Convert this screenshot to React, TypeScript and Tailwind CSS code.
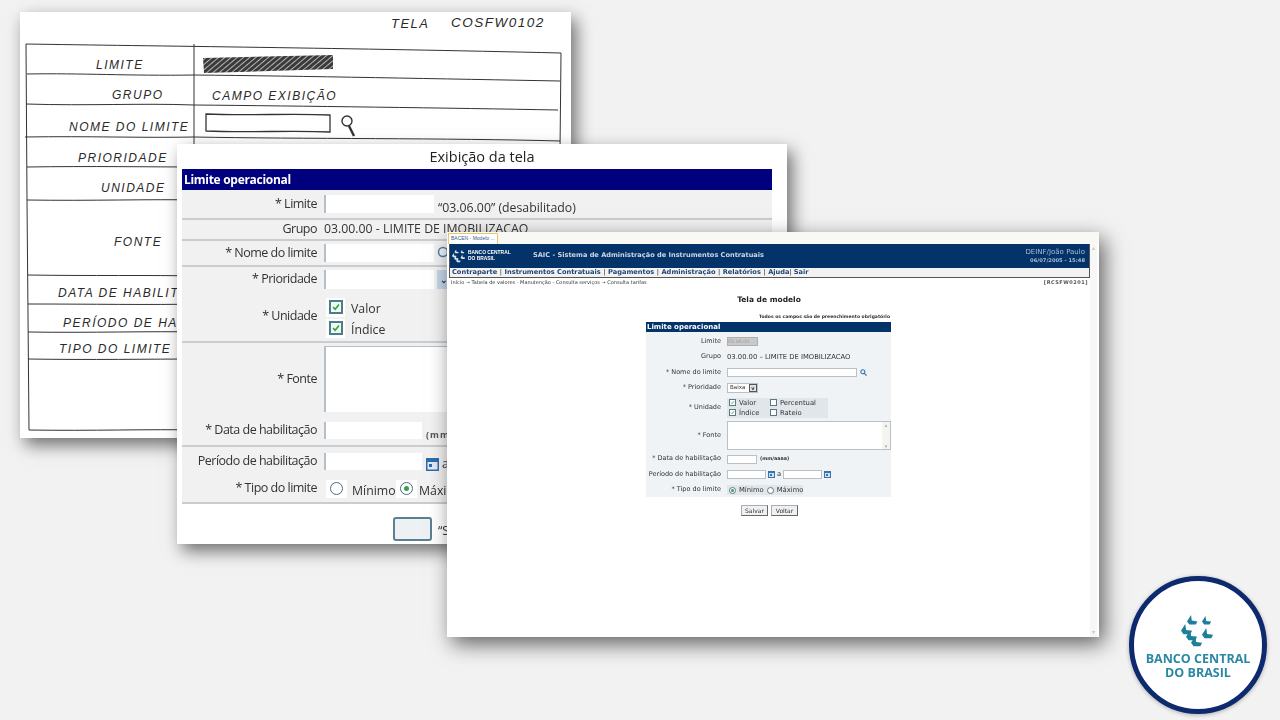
import React from "react";

const Check = () => (
  <svg viewBox="0 0 12 12" className="w-full h-full">
    <path d="M2.5 6.2 L5 8.8 L9.6 3" fill="none" stroke="#2fa63a" strokeWidth="2" />
  </svg>
);

function Sketch() {
  const hand = "font-['Liberation_Sans',sans-serif] italic text-[12px] tracking-[1.5px] fill-[#2a2a2a]";
  const rows = [
    "M27 74 C80 73 130 76 194 75 C300 76 450 79 560 81",
    "M26 104 C90 106 140 103 194 105 C300 106 450 108 558 110",
    "M25 137 C90 136 140 138 194 137 C300 139 450 138 560 141",
    "M27 167 C90 166 150 167 200 167",
    "M27 200 C90 201 150 199 200 200",
    "M28 275 C90 276 150 275 200 276",
    "M28 304 C90 304 150 305 200 304",
    "M28 332 C90 333 150 331 200 332",
    "M28 359 C90 360 150 359 200 359",
    "M29 430 C90 431 150 429 200 430",
  ];
  return (
    <svg viewBox="20 12 551 426" className="w-full h-full">
      <defs>
        <pattern id="hatch" width="4" height="4" patternUnits="userSpaceOnUse" patternTransform="rotate(50)">
          <rect width="4" height="4" fill="#3a3a3a" />
          <rect width="1" height="4" fill="#b5b5b5" />
        </pattern>
      </defs>
      <g fill="none" stroke="#333" strokeWidth="1">
        <path d="M26 44 C150 46 350 48 561 53" />
        <path d="M26 44 L27 200 L29 430" />
        <path d="M194 44 L194 150" />
        <path d="M561 53 L560 150" />
        {rows.map((d) => (
          <path key={d} d={d} />
        ))}
        <path d="M206 114 C250 116 290 113 330 115 L330 132 C290 130 250 133 206 131 Z" strokeWidth="1.3" />
        <circle cx="347" cy="121" r="5" strokeWidth="1.4" />
        <path d="M349 126 L354 136" strokeWidth="2.4" />
      </g>
      <polygon points="203,58 333,55 333,69 204,73" fill="url(#hatch)" />
      <text x="391" y="28" className={hand + " text-[13px] tracking-[0.5px]"}>TELA</text>
      <text x="451" y="27" className={hand + " text-[13.5px] tracking-[0.4px]"}>COSFW0102</text>
      <text x="96" y="69" className={hand}>LIMITE</text>
      <text x="112" y="99" className={hand}>GRUPO</text>
      <text x="212" y="100" className={hand}>CAMPO EXIBIÇÃO</text>
      <text x="69" y="131" className={hand + " text-[11px]"}>NOME DO LIMITE</text>
      <text x="78" y="162" className={hand + " text-[11px]"}>PRIORIDADE</text>
      <text x="101" y="192" className={hand + " text-[11px]"}>UNIDADE</text>
      <text x="114" y="246" className={hand}>FONTE</text>
      <text x="58" y="297" className={hand + " text-[11px]"}>DATA DE HABILITAÇÃO</text>
      <text x="63" y="327" className={hand + " text-[11px]"}>PERÍODO DE HABILITAÇÃO</text>
      <text x="59" y="353" className={hand + " text-[11px]"}>TIPO DO LIMITE</text>
    </svg>
  );
}

function MidRow({ label, h, line, children }: { label: string; h: string; line?: boolean; children?: React.ReactNode }) {
  return (
    <div className={`flex items-center ${h} ${line ? "border-b-2 border-[#c9cdd0]" : ""}`}>
      <div className="w-[135px] shrink-0 text-right text-[12.5px] tracking-[-0.5px] text-[#333] whitespace-nowrap">{label}</div>
      <div className="ml-[7px] flex-1 flex items-center text-[#333] text-[12.3px] whitespace-nowrap">{children}</div>
    </div>
  );
}

const MidInput = ({ w = "w-[110px]", h = "h-[18px]" }: { w?: string; h?: string }) => (
  <div className={`${w} ${h} bg-white border-l-2 border-[#b4bfc9] shrink-0`} />
);

const MidCheck = () => (
  <div className="w-[19px] h-[19px] bg-white flex items-center justify-center shrink-0">
    <div className="w-[14px] h-[14px] border-2 border-[#4d7d8c] bg-[#f2fbf2]">
      <Check />
    </div>
  </div>
);

function MidRadio({ on }: { on?: boolean }) {
  return (
    <div className="w-[21px] h-[18px] bg-white flex items-center justify-center shrink-0">
      <div className="w-[13px] h-[13px] rounded-full border border-[#4d6d7c] flex items-center justify-center">
        {on ? <div className="w-[5px] h-[5px] rounded-full bg-[#38a048]" /> : null}
      </div>
    </div>
  );
}

function Middle() {
  return (
    <div className="absolute left-[177px] top-[144px] w-[610px] h-[400px] bg-white shadow-[5px_7px_16px_rgba(0,0,0,0.55)] font-['Open_Sans',sans-serif] blur-[0.3px]">
      <div className="h-[25px] flex items-center justify-center text-[14.5px] text-[#222]">Exibição da tela</div>
      <div className="ml-[5px] w-[590px]">
        <div className="h-[21px] bg-[#00007f] text-white font-bold text-[12px] tracking-[-0.3px] flex items-center pl-[2px]">Limite operacional</div>
        <div className="bg-[#f1f1f1]">
          <MidRow label="* Limite" h="h-[30px]" line>
            <MidInput />
            <span className="ml-[4px] mt-[8px]">“03.06.00” (desabilitado)</span>
          </MidRow>
          <MidRow label="Grupo" h="h-[21px]" line>
            <span className="-mt-[1px]">03.00.00 - LIMITE DE IMOBILIZACAO</span>
          </MidRow>
          <MidRow label="* Nome do limite" h="h-[26px]" line>
            <MidInput />
            <svg viewBox="0 0 14 14" className="ml-[3px] w-[14px] h-[14px]">
              <circle cx="6" cy="6" r="4.5" fill="none" stroke="#4a7fb0" strokeWidth="1.5" />
            </svg>
          </MidRow>
          <MidRow label="* Prioridade" h="h-[25px]">
            <MidInput h="h-[19px]" />
            <div className="ml-[3px] w-[14px] h-[19px] bg-[#c5d6ea] flex items-center justify-center text-[#23456b] text-[9px] font-bold">⌄</div>
          </MidRow>
          <MidRow label="* Unidade" h="h-[51px]" line>
            <div className="flex flex-col ml-[2px] mt-[2px]">
              <div className="flex items-center h-[21px]">
                <MidCheck />
                <span className="ml-[6px] mt-[5px]">Valor</span>
              </div>
              <div className="flex items-center h-[21px]">
                <MidCheck />
                <span className="ml-[6px] mt-[5px]">Índice</span>
              </div>
            </div>
          </MidRow>
          <MidRow label="* Fonte" h="h-[72px]">
            <div className="w-[200px] h-[66px] bg-white border-l-2 border-t border-[#b4bfc9] -mt-[1px]" />
          </MidRow>
          <MidRow label="* Data de habilitação" h="h-[32px]" line>
            <MidInput w="w-[98px]" h="h-[17px]" />
            <span className="ml-[4px] mt-[10px] text-[9px] font-bold tracking-[1px] text-[#555]">(mm/aaaa)</span>
          </MidRow>
          <MidRow label="Período de habilitação" h="h-[28px]">
            <MidInput w="w-[98px]" h="h-[17px]" />
            <svg viewBox="0 0 13 13" className="ml-[4px] mt-[6px] w-[13px] h-[13px]">
              <rect width="13" height="13" fill="#2f6cab" />
              <rect x="1.5" y="4" width="10" height="7.5" fill="#dfeaf5" />
              <rect x="3" y="6" width="3" height="3" fill="#2f6cab" />
            </svg>
            <span className="ml-[3px] mt-[6px]">a</span>
          </MidRow>
          <MidRow label="* Tipo do limite" h="h-[29px]" line>
            <div className="ml-[2px]"><MidRadio /></div>
            <span className="ml-[5px] mt-[6px] w-[44px]">Mínimo</span>
            <MidRadio on />
            <span className="ml-[2px] mt-[6px]">Máximo</span>
          </MidRow>
        </div>
        <div className="flex pl-[211px] pt-[13px] items-end">
          <div className="w-[39px] h-[24px] rounded-[3px] border-2 border-[#5b7f93] bg-[#eef1f4]" />
          <span className="ml-[6px] text-[12.5px] text-[#333]">“Salvar”</span>
        </div>
      </div>
    </div>
  );
}

function Cal() {
  return (
    <svg viewBox="0 0 7 7" className="w-[7px] h-[7px] shrink-0">
      <rect width="7" height="7" fill="#3a72b0" />
      <rect x="1" y="2" width="5" height="4" fill="#cfe0f0" />
      <rect x="2" y="3" width="2" height="2" fill="#3a72b0" />
    </svg>
  );
}

const Field = ({ w }: { w: string }) => <div className={`${w} h-[9px] bg-white border border-[#b9c0c6] shrink-0`} />;
const Box = ({ on }: { on?: boolean }) => (
  <div className="w-[7px] h-[7px] border border-[#5f7785] bg-white shrink-0">{on ? <Check /> : null}</div>
);
const Dot = ({ on }: { on?: boolean }) => (
  <div className="w-[7px] h-[7px] rounded-full border border-[#5f7785] bg-white shrink-0 flex items-center justify-center">
    {on ? <div className="w-[3px] h-[3px] rounded-full bg-[#3c9c4c]" /> : null}
  </div>
);

function TRow({ label, h, children }: { label: string; h: string; children?: React.ReactNode }) {
  return (
    <div className={`flex items-center ${h}`}>
      <div className="w-[75px] shrink-0 text-right text-[6.5px] text-[#333] whitespace-nowrap">{label}</div>
      <div className="ml-[6px] flex-1 flex items-center text-[6.8px] text-[#333] whitespace-nowrap">{children}</div>
    </div>
  );
}

function LogoMark({ color, cls }: { color: string; cls: string }) {
  const piece = "M5 0 L6 7 L13 8 L11 12 L3 12 L0 8 Z";
  const spots: [number, number, number][] = [
    [6, 1, 0.8],
    [21, 2, 0.7],
    [0, 10, 0.85],
    [5, 16, 0.85],
    [10, 22, 0.85],
    [21, 14, 0.85],
  ];
  return (
    <svg viewBox="0 0 34 34" className={cls}>
      {spots.map(([x, y, s]) => (
        <path key={`${x}-${y}`} d={piece} transform={`translate(${x} ${y}) scale(${s})`} fill={color} />
      ))}
    </svg>
  );
}

function Front() {
  const nav = ["Contraparte", "Instrumentos Contratuais", "Pagamentos", "Administração", "Relatórios"];
  return (
    <div className="absolute left-[447px] top-[232px] w-[652px] h-[405px] bg-white shadow-[5px_7px_20px_rgba(0,0,0,0.6)] font-['DejaVu_Sans',sans-serif] flex flex-col blur-[0.35px]">
      <div className="h-[12px] flex items-end pl-[1px] bg-[#f8f8f4]">
        <div className="w-[50px] h-[11px] bg-white border border-[#e8c66a] border-b-0 rounded-t-[1px] text-[5px] text-[#3a5d8a] flex items-center pl-[2px] font-['Liberation_Sans',sans-serif] whitespace-nowrap overflow-hidden">
          BACEN - Modelo ...
        </div>
      </div>
      <div className="flex flex-1 min-h-0">
        <div className="w-[643px] pl-[2px] flex flex-col">
          <div className="border border-[#555] border-t-0">
            <div className="h-[24px] bg-[#04336a] flex items-center text-white">
              <div className="ml-[2px] flex items-center w-[81px] shrink-0">
                <LogoMark color="#d7e6ef" cls="w-[14px] h-[14px] shrink-0" />
                <div className="ml-[2px] text-[4.9px] font-bold leading-[6px] font-['Liberation_Sans',sans-serif] whitespace-nowrap">
                  BANCO CENTRAL
                  <br />
                  DO BRASIL
                </div>
              </div>
              <div className="text-[6.6px] font-bold text-[#c9d6e4] whitespace-nowrap">SAIC - Sistema de Administração de Instrumentos Contratuais</div>
              <div className="ml-auto mr-[4px] text-right text-[#a9bdd3]">
                <div className="text-[7px] leading-[9px]">DEINF/João Paulo</div>
                <div className="text-[5.2px] leading-[7px] font-bold">06/07/2005 - 15:48</div>
              </div>
            </div>
            <div className="h-[9px] bg-[#f2f2f2] flex items-center pl-[2px] text-[6.65px] font-bold text-[#1e4473] whitespace-nowrap">
              {nav.map((n) => (
                <React.Fragment key={n}>
                  <span>{n}</span>
                  <span className="mx-[2.5px] text-[#222] font-normal">|</span>
                </React.Fragment>
              ))}
              <span>Ajuda</span>
              <span className="mr-[2px] text-[#222] font-normal">|</span>
              <span>Sair</span>
            </div>
          </div>
          <div className="h-[8px] flex items-end justify-between pl-[2px] pr-[2px] text-[5px] text-[#333] whitespace-nowrap leading-[7px]">
            <span>Início  ➝  Tabela de valores - Manutenção - Consulta serviços  ➝  Consulta tarifas</span>
            <span className="font-bold tracking-[0.5px] text-[#555]">[RCSFW0201]</span>
          </div>
          <div className="mt-[9px] h-[10px] flex items-center justify-center text-[7.5px] font-bold text-[#222] pr-[1px]">Tela de modelo</div>
          <div className="mt-[9px] w-[441px] h-[6px] text-right text-[4.5px] font-bold text-[#333] whitespace-nowrap leading-[6px]">
            Todos os campos são de preenchimento obrigatório
          </div>
          <div className="ml-[197px] mt-[2px] w-[245px]">
            <div className="h-[10px] bg-[#04336a] text-white text-[7px] font-bold flex items-center pl-[1px]">Limite operacional</div>
            <div className="bg-[#f0f3f5] h-[165px] pt-[2px]">
              <TRow label="Limite" h="h-[15px]">
                <div className="w-[31px] h-[9px] bg-[#c9c9c9] border border-[#b0b0b0] text-[4.8px] text-[#9a9a9a] leading-[7px]">03.06.00</div>
              </TRow>
              <TRow label="Grupo" h="h-[16px]">
                <span className="mt-[1px]">03.00.00 – LIMITE DE IMOBILIZACAO</span>
              </TRow>
              <TRow label="* Nome do limite" h="h-[15px]">
                <Field w="w-[130px]" />
                <svg viewBox="0 0 8 8" className="ml-[3px] w-[7px] h-[7px]">
                  <circle cx="3.2" cy="3.2" r="2.3" fill="none" stroke="#3a72b0" strokeWidth="1.2" />
                  <path d="M5 5 L7.5 7.5" stroke="#3a72b0" strokeWidth="1.4" />
                </svg>
              </TRow>
              <TRow label="* Prioridade" h="h-[15px]">
                <div className="w-[31px] h-[10px] bg-white border border-[#b9c0c6] flex items-center justify-between text-[5.5px] pl-[2px]">
                  Baixa
                  <span className="w-[8px] h-[8px] bg-[#dfe3e7] border border-[#555] text-[5px] leading-[6px] text-center font-bold">v</span>
                </div>
              </TRow>
              <TRow label="* Unidade" h="h-[25px]">
                <div className="w-[101px] h-[20px] bg-[#e1e6ea] grid grid-cols-[41px_1fr] items-center pl-[2px]">
                  <div className="flex items-center gap-[3px]"><Box on />Valor</div>
                  <div className="flex items-center gap-[3px]"><Box />Percentual</div>
                  <div className="flex items-center gap-[3px]"><Box on />Índice</div>
                  <div className="flex items-center gap-[3px]"><Box />Rateio</div>
                </div>
              </TRow>
              <TRow label="* Fonte" h="h-[31px]">
                <div className="w-[164px] h-[29px] bg-white border border-[#b9c0c6] flex justify-end">
                  <div className="w-[8px] bg-[#f4f4f0] flex flex-col justify-between text-[5px] leading-[6px] text-center text-[#aaa]">
                    <span>▴</span>
                    <span>▾</span>
                  </div>
                </div>
              </TRow>
              <TRow label="* Data de habilitação" h="h-[16px]">
                <Field w="w-[30px]" />
                <span className="ml-[3px] text-[4.8px] font-bold">(mm/aaaa)</span>
              </TRow>
              <TRow label="Período de habilitação" h="h-[15px]">
                <Field w="w-[39px]" />
                <span className="ml-[2px]"><Cal /></span>
                <span className="mx-[2px]">a</span>
                <Field w="w-[39px]" />
                <span className="ml-[2px]"><Cal /></span>
              </TRow>
              <TRow label="* Tipo do limite" h="h-[16px]">
                <div className="w-[76px] h-[10px] bg-[#e1e6ea] flex items-center pl-[2px] gap-[3px]">
                  <Dot on />
                  <span>Mínimo</span>
                  <Dot />
                  <span>Máximo</span>
                </div>
              </TRow>
            </div>
          </div>
          <div className="ml-[292px] mt-[8px] flex gap-[3px]">
            {["Salvar", "Voltar"].map((b) => (
              <div key={b} className="w-[27px] h-[11px] bg-[#eef0f2] border border-[#aab] border-r-[#666] border-b-[#666] text-[6px] text-[#333] flex items-center justify-center">
                {b}
              </div>
            ))}
          </div>
        </div>
        <div className="w-[7px] bg-[#f7f7f7] flex flex-col justify-between text-[6px] text-[#c8c8c0] text-center leading-[8px] pb-[1px]">
          <span>▴</span>
          <span>▾</span>
        </div>
      </div>
    </div>
  );
}

function Logo() {
  return (
    <div className="absolute left-[1129px] top-[576px] w-[138px] h-[138px] rounded-full bg-white border-[5px] border-[#0e2a6e] shadow-[0_1px_4px_rgba(0,0,0,0.3)] flex flex-col items-center pt-[33px] font-['Open_Sans',sans-serif] blur-[0.3px]">
      <LogoMark color="#1f7f99" cls="w-[34px] h-[34px] shrink-0" />
      <div className="mt-[4px] text-center text-[12.5px] font-bold leading-[14px] text-[#2a88a4] whitespace-nowrap">
        <div>BANCO CENTRAL</div>
        <div>DO BRASIL</div>
      </div>
    </div>
  );
}

export default function App() {
  return (
    <div className="relative w-[1280px] h-[720px] overflow-hidden bg-[#f2f2f2]">
      <div className="absolute left-[20px] top-[12px] w-[551px] h-[426px] bg-white shadow-[5px_7px_16px_rgba(0,0,0,0.55)]">
        <Sketch />
      </div>
      <Middle />
      <Front />
      <Logo />
    </div>
  );
}
